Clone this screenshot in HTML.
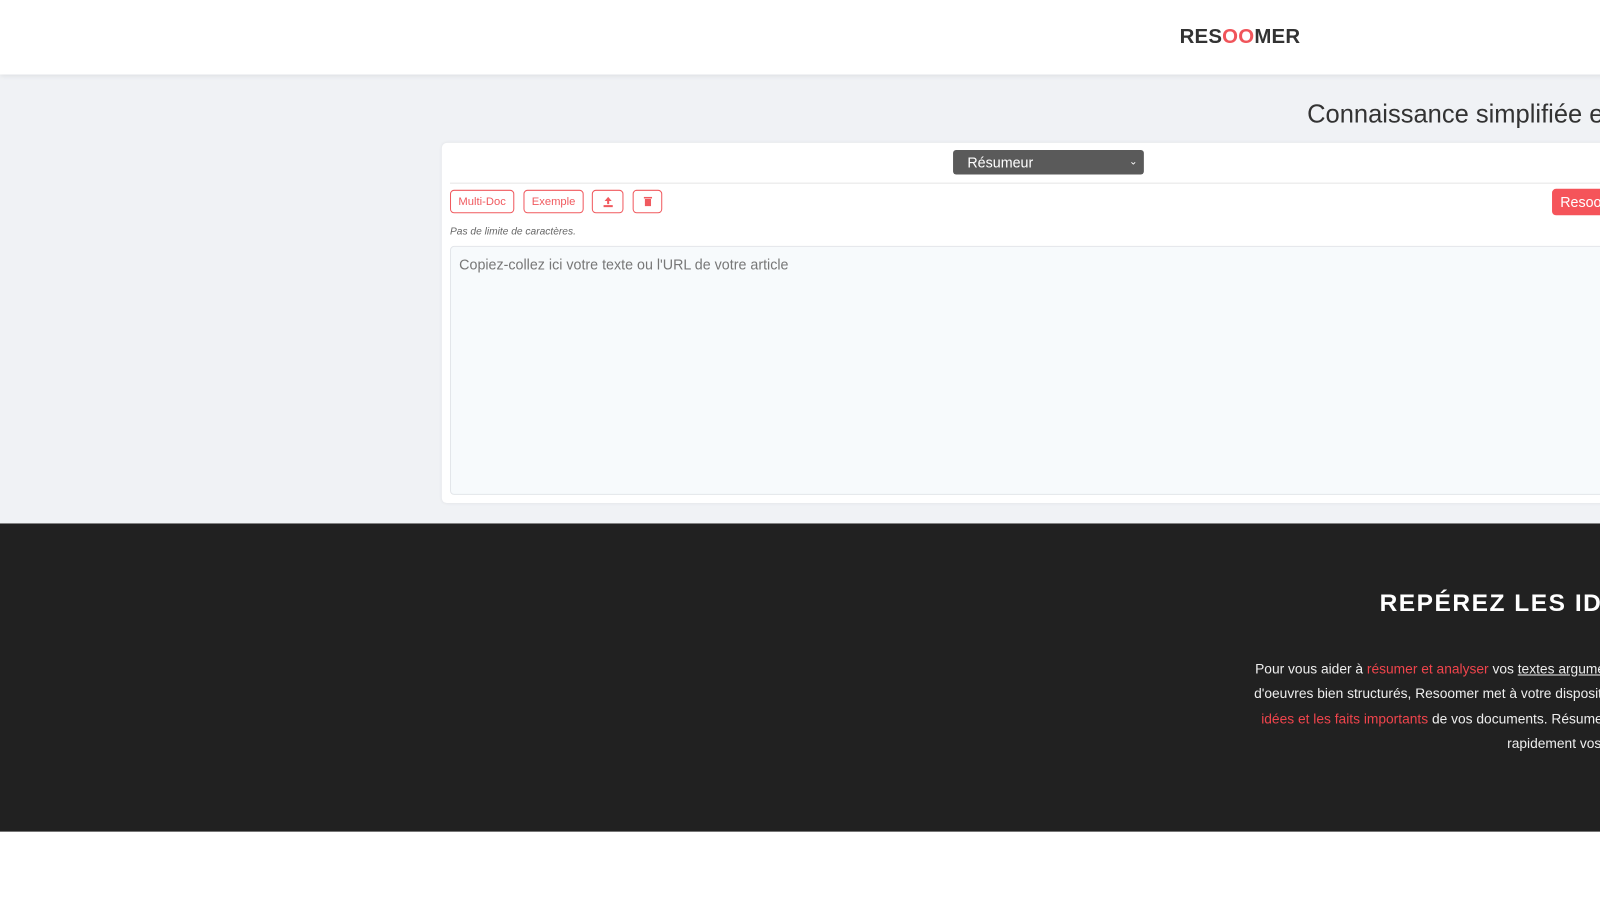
<!DOCTYPE html>
<html><head><meta charset="utf-8"><style>
*{margin:0;padding:0;box-sizing:border-box}
body{width:1600px;height:900px;overflow:hidden;position:relative;background:#fff;font-family:"Liberation Sans",sans-serif}
#w{position:absolute;left:0;top:0;width:1568px;height:882px;transform:scale(1.0204);transform-origin:0 0}
.a{position:absolute;white-space:nowrap}
.btn{position:absolute;top:186px;height:23px;border:1px solid #f05a5f;border-radius:4px;color:#f05a5f;font-size:11px;line-height:22px;text-align:center;background:#fff}
.r{color:#f0444c}
</style></head><body><div id="w">
<div class="a" style="left:0;top:0;width:1600px;height:73px;background:#fff;box-shadow:0 2px 5px rgba(0,0,0,.08);z-index:2"></div>
<div class="a" style="left:1156px;top:25px;font-size:20px;font-weight:bold;color:#333;letter-spacing:.2px;z-index:3">RES<span style="color:#f0545a">OO</span>MER</div>
<div class="a" style="left:0;top:73px;width:1600px;height:440px;background:#f0f2f5"></div>
<div class="a" style="left:1281px;top:98px;font-size:25px;color:#333">Connaissance simplifiée e</div>
<div class="a" style="left:433px;top:140px;width:1200px;height:353px;background:#fff;border-radius:5px;box-shadow:0 0 3px rgba(0,0,0,.06)"></div>
<div class="a" style="left:934px;top:147px;width:187px;height:24px;background:#5a5a5a;border-radius:3px;color:#fff;font-size:14px;line-height:24px;padding-left:14px">Résumeur<span style="position:absolute;right:6px;font-size:10px">&#8964;</span></div>
<div class="a" style="left:441px;top:179px;width:1200px;height:1px;background:#e5e5e5"></div>
<div class="btn" style="left:441px;width:63px">Multi-Doc</div>
<div class="btn" style="left:513px;width:59px">Exemple</div>
<div class="btn" style="left:580px;width:31px"><svg width="12" height="12" viewBox="0 0 12 12" style="margin-top:5px"><path d="M6 1L2.5 5H5v3h2V5h2.5z" fill="#f05a5f"/><rect x="1.5" y="9" width="9" height="2" fill="#f05a5f"/></svg></div>
<div class="btn" style="left:620px;width:29px"><svg width="10" height="11" viewBox="0 0 10 11" style="margin-top:5px"><rect x="1" y="1" width="8" height="1.5" fill="#f05a5f"/><rect x="2" y="3" width="6" height="7" fill="#f05a5f"/></svg></div>
<div class="a" style="left:1521px;top:185px;width:100px;height:26px;background:#f5545a;border-radius:4px;color:#fff;font-size:14px;line-height:26px;padding-left:8px">Resoomer</div>
<div class="a" style="left:441px;top:222px;font-size:10px;font-style:italic;color:#666">Pas de limite de caractères.</div>
<div class="a" style="left:441px;top:241px;width:1200px;height:244px;background:#f7fafc;border:1px solid #e3e6ea;border-radius:4px"></div>
<div class="a" style="left:450px;top:251px;font-size:14px;color:#777">Copiez-collez ici votre texte ou l'URL de votre article</div>
<div class="a" style="left:0;top:513px;width:1600px;height:302px;background:#212121"></div>
<div class="a" style="left:1352px;top:578px;font-size:24px;font-weight:bold;color:#fff;letter-spacing:1.5px">REPÉREZ LES IDÉES</div>
<div class="a" style="left:1230px;top:648px;font-size:13.5px;color:#eee">Pour vous aider à <span class="r">résumer et analyser</span> vos <u>textes argumentatifs</u></div>
<div class="a" style="left:1229px;top:672px;font-size:13.5px;color:#eee">d'oeuvres bien structurés, Resoomer met à votre disposition</div>
<div class="a" style="left:1236px;top:697px;font-size:13.5px;color:#eee"><span class="r">idées et les faits importants</span> de vos documents. Résumez</div>
<div class="a" style="left:1477px;top:721px;font-size:13.5px;color:#eee">rapidement vos</div>
</div></body></html>
